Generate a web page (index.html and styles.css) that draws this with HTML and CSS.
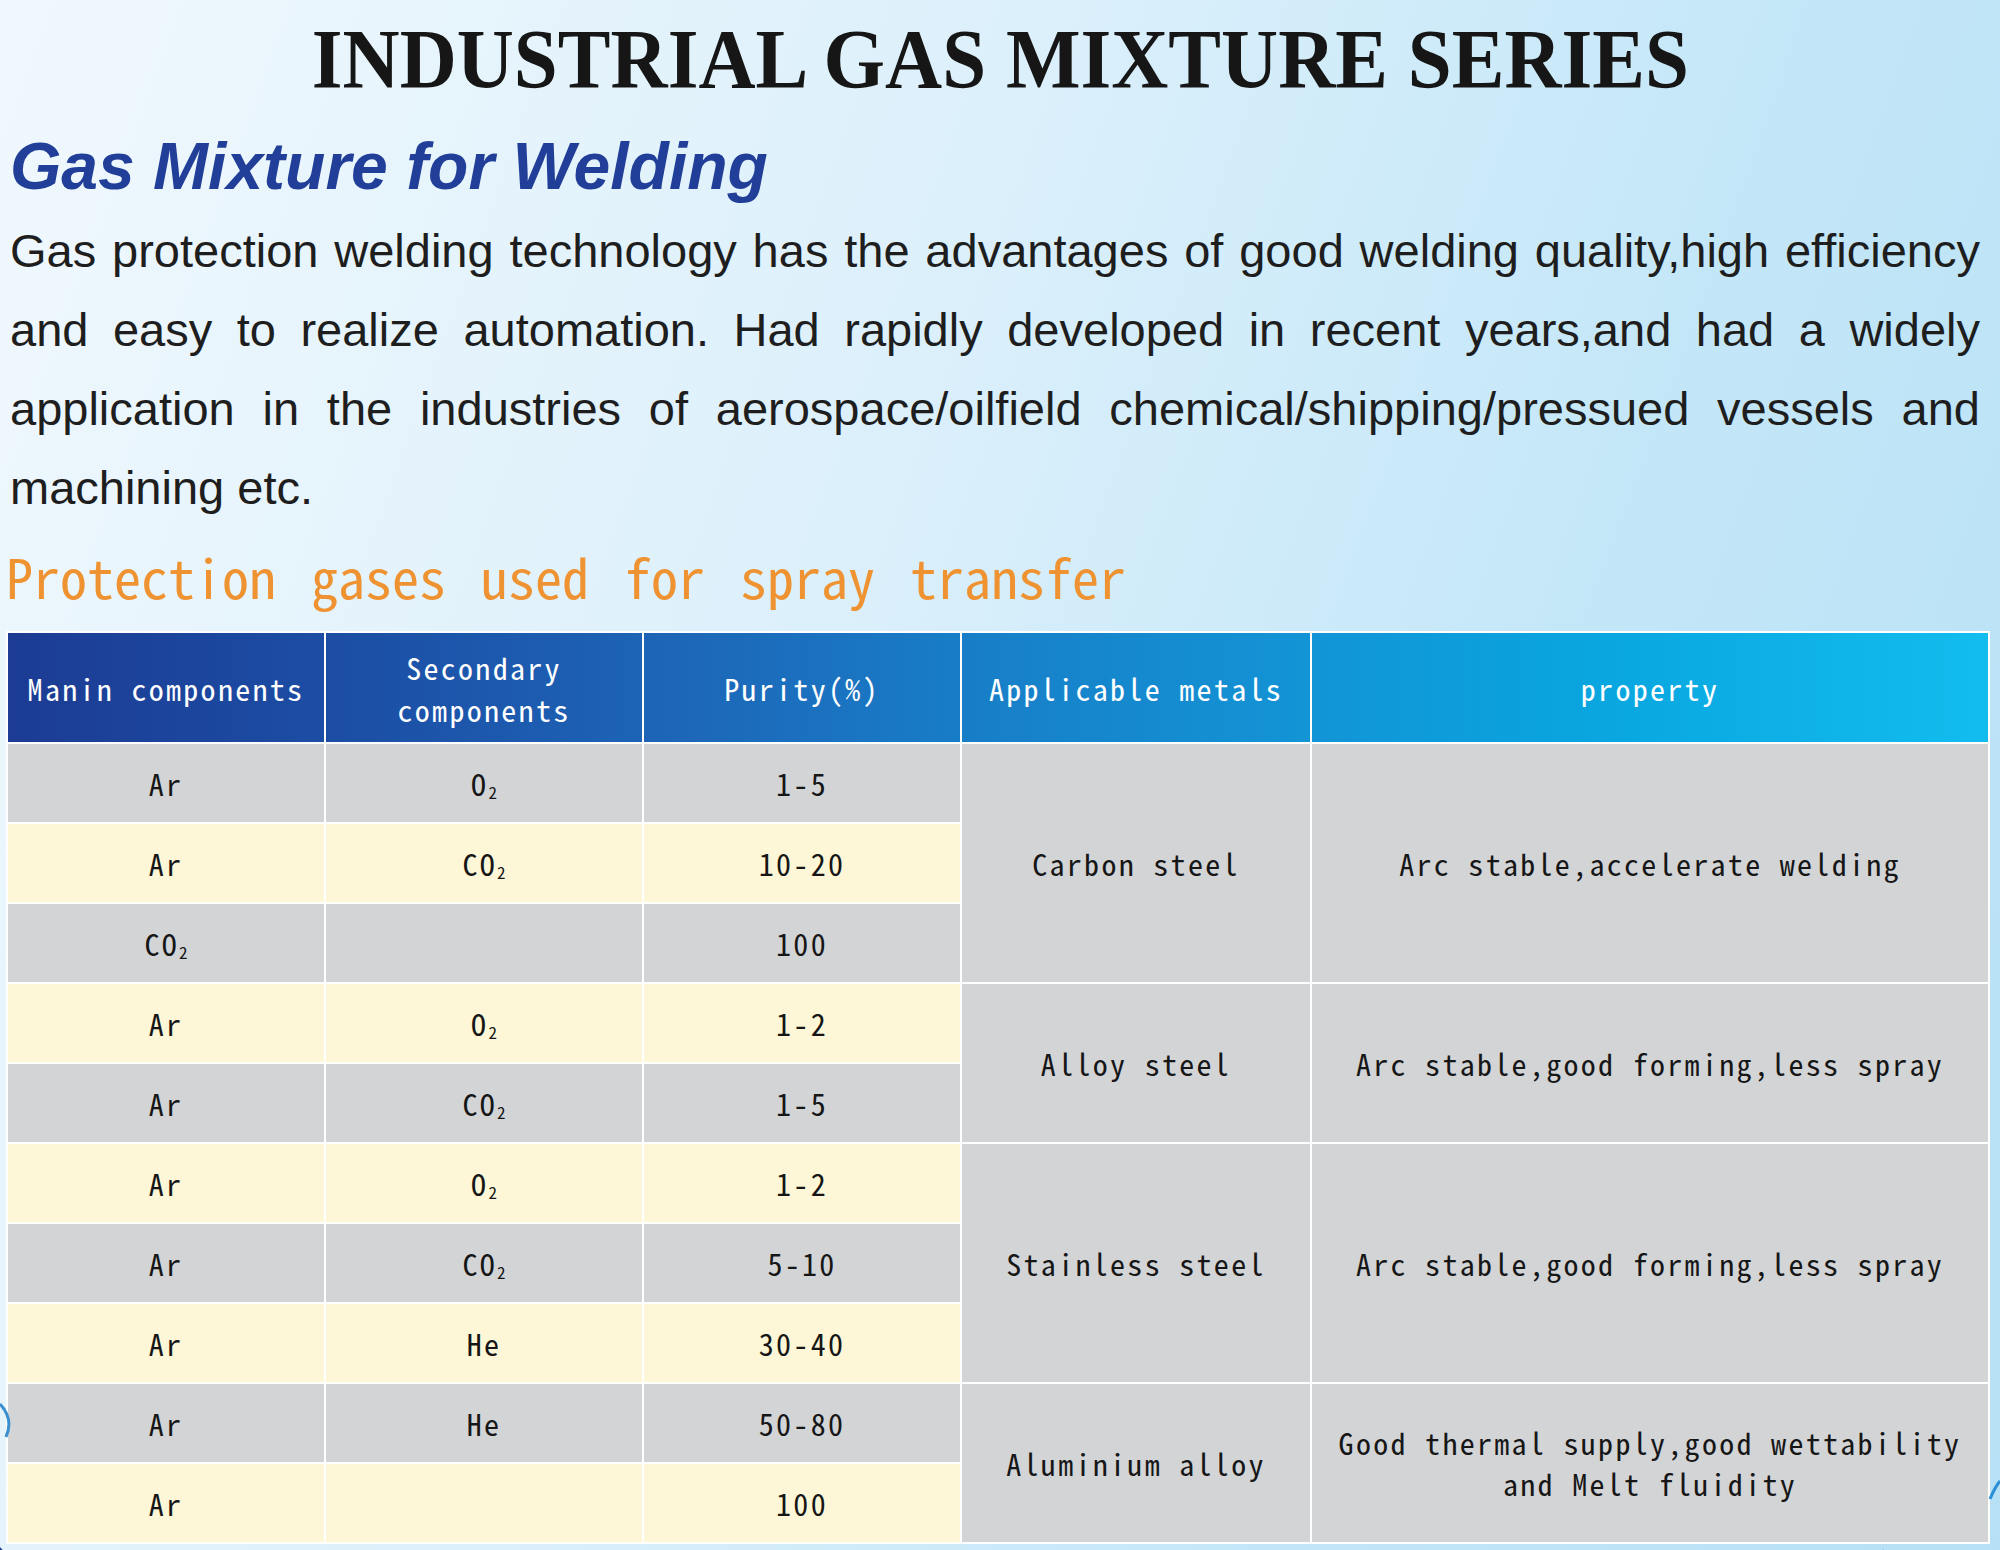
FILE: index.html
```html
<!DOCTYPE html>
<html lang="en">
<head>
<meta charset="utf-8">
<title>Industrial Gas Mixture Series</title>
<link rel="stylesheet" href="styles.css">
</head>
<body>
<div class="page">
  <svg class="deco" width="2000" height="1550" viewBox="0 0 2000 1550" aria-hidden="true">
    <path d="M0 1395 Q 14 1410 6 1428" stroke="#3a8fd0" stroke-width="3" fill="none"/>
    <path d="M0 1538 Q 8 1548 22 1550 L0 1550 Z" fill="#1f3f95"/>
    <path d="M330 1543 Q 360 1548 372 1550" stroke="#7ab6e0" stroke-width="2" fill="none"/>
    <path d="M1990 1490 Q 1995 1478 2000 1472" stroke="#2a8fd6" stroke-width="3" fill="none"/>
    <path d="M1866 1550 Q 1872 1546 1884 1542" stroke="#2a8fd6" stroke-width="3" fill="none"/>
  </svg>
  <h1 class="title"><span class="title-text">INDUSTRIAL GAS MIXTURE SERIES</span></h1>
  <h2 class="subtitle">Gas Mixture for Welding</h2>
  <p class="intro">
    <span class="line">Gas protection welding technology has the advantages of good welding quality,high efficiency</span>
    <span class="line">and easy to realize automation. Had rapidly developed in recent years,and had a widely</span>
    <span class="line">application in the industries of aerospace/oilfield chemical/shipping/pressued vessels and</span>
    <span class="line last">machining etc.</span>
  </p>
  <h3 class="section">Protection gases used for spray transfer</h3>
  <table class="gas-table">
    <colgroup>
      <col class="c1"><col class="c2"><col class="c3"><col class="c4"><col class="c5">
    </colgroup>
    <thead>
      <tr>
        <th>Manin components</th>
        <th>Secondary<br>components</th>
        <th>Purity(%)</th>
        <th>Applicable metals</th>
        <th>property</th>
      </tr>
    </thead>
    <tbody>
      <tr class="gray">
        <td>Ar</td><td>O<sub>2</sub></td><td>1-5</td>
        <td class="merged" rowspan="3">Carbon steel</td>
        <td class="merged" rowspan="3">Arc stable,accelerate welding</td>
      </tr>
      <tr class="cream"><td>Ar</td><td>CO<sub>2</sub></td><td>10-20</td></tr>
      <tr class="gray"><td>CO<sub>2</sub></td><td></td><td>100</td></tr>
      <tr class="cream">
        <td>Ar</td><td>O<sub>2</sub></td><td>1-2</td>
        <td class="merged" rowspan="2">Alloy steel</td>
        <td class="merged" rowspan="2">Arc stable,good forming,less spray</td>
      </tr>
      <tr class="gray"><td>Ar</td><td>CO<sub>2</sub></td><td>1-5</td></tr>
      <tr class="cream">
        <td>Ar</td><td>O<sub>2</sub></td><td>1-2</td>
        <td class="merged" rowspan="3">Stainless steel</td>
        <td class="merged" rowspan="3">Arc stable,good forming,less spray</td>
      </tr>
      <tr class="gray"><td>Ar</td><td>CO<sub>2</sub></td><td>5-10</td></tr>
      <tr class="cream"><td>Ar</td><td>He</td><td>30-40</td></tr>
      <tr class="gray">
        <td>Ar</td><td>He</td><td>50-80</td>
        <td class="merged" rowspan="2">Aluminium alloy</td>
        <td class="merged two" rowspan="2">Good thermal supply,good wettability<br>and Melt fluidity</td>
      </tr>
      <tr class="cream"><td>Ar</td><td></td><td>100</td></tr>
    </tbody>
  </table>
</div>
</body>
</html>
```

FILE: styles.css
```css
html, body {
  margin: 0;
  padding: 0;
}
body {
  width: 2000px;
  height: 1550px;
  overflow: hidden;
  background: linear-gradient(110deg, #f0f8fd 0%, #dcf0fb 40%, #c4e7f8 70%, #b6e0f5 100%);
}
.page {
  position: relative;
  width: 2000px;
  height: 1550px;
}
.deco {
  position: absolute;
  left: 0;
  top: 0;
  pointer-events: none;
}
.title {
  margin: 9px 0 0 0;
  height: 100px;
  line-height: 100px;
  text-align: center;
  font-family: "Liberation Serif", "Times New Roman", serif;
  font-weight: bold;
  font-size: 85px;
  color: #161616;
  white-space: nowrap;
}
.title-text {
  display: inline-block;
  transform: scaleX(0.93);
  transform-origin: center;
}
.subtitle {
  margin: 17px 0 0 10px;
  height: 80px;
  line-height: 80px;
  font-family: "Liberation Sans", Arial, sans-serif;
  font-style: italic;
  font-weight: bold;
  font-size: 66px;
  color: #213f98;
  white-space: nowrap;
}
.intro {
  margin: 5px 20px 0 10px;
  font-family: "Liberation Sans", Arial, sans-serif;
  font-size: 47px;
  line-height: 79px;
  color: #1e1e1e;
}
.intro .line {
  display: block;
  text-align: justify;
  text-align-last: justify;
  white-space: nowrap;
}
.intro .line.last {
  text-align-last: left;
}
.section {
  margin: 4px 0 0 6px;
  height: 90px;
  line-height: 90px;
  font-family: "Noto Sans Mono CJK SC", "Noto Sans CJK SC", "DejaVu Sans Mono", monospace;
  font-feature-settings: "hwid";
  font-weight: normal;
  font-size: 54px;
  word-spacing: 8px;
  color: #ef9231;
  white-space: nowrap;
}
.gas-table {
  margin: 10px 0 0 6px;
  width: 1984px;
  table-layout: fixed;
  border-collapse: separate;
  border-spacing: 2px;
  background: #ffffff;
  font-family: "Noto Sans Mono CJK SC", "Noto Sans CJK SC", "DejaVu Sans Mono", monospace;
  font-feature-settings: "hwid";
  font-size: 30px;
  letter-spacing: 2.3px;
  color: #161616;
}
.c1, .c2, .c3 { width: 316px; }
.c4 { width: 348px; }
.c5 { width: 676px; }
.gas-table th {
  height: 109px;
  padding: 0;
  font-weight: normal;
  color: #ffffff;
  line-height: 42px;
  text-align: center;
  vertical-align: middle;
  background: linear-gradient(90deg, #1c3b93 0%, #1c4fa6 18%, #1d68b9 35%, #1780c9 50%, #1490d3 62%, #09a6e0 80%, #13bdee 100%);
  background-attachment: fixed;
}
.gas-table td {
  height: 78px;
  padding: 0;
  text-align: center;
  vertical-align: middle;
  line-height: 41px;
}
.gas-table tr.gray td { background: #d3d4d6; }
.gas-table tr.cream td { background: #fdf7d7; }
.gas-table td.merged { background: #d3d4d6 !important; }
.gas-table sub {
  font-size: 17px;
  line-height: 0;
  vertical-align: -3px;
  letter-spacing: 0;
}
```
